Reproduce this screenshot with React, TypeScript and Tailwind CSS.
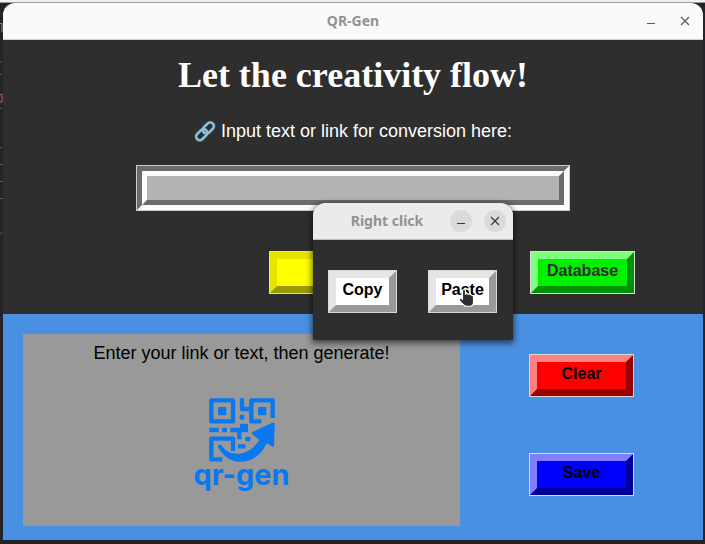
import type { ReactNode } from "react";

function WindowControls({ raised = false }: { raised?: boolean }) {
  const look = raised ? "bg-[#dadada] text-[#3d3d3d]" : "text-[#5c5c5c]";
  return (
    <div className="flex items-center justify-end gap-3">
      <button
        type="button"
        aria-label="Minimize"
        className={`flex size-[22px] items-center justify-center rounded-full ${look}`}
      >
        <svg width="12" height="12" viewBox="0 0 12 12" fill="currentColor">
          <rect x="2" y="8" width="8" height="1" />
        </svg>
      </button>
      <button
        type="button"
        aria-label="Close"
        className={`flex size-[22px] items-center justify-center rounded-full ${look}`}
      >
        <svg width="12" height="12" viewBox="0 0 12 12" stroke="currentColor" strokeWidth="1.3">
          <path d="M2 2 L10 10 M10 2 L2 10" />
        </svg>
      </button>
    </div>
  );
}

function RaisedButton({
  edge,
  width,
  children,
}: {
  edge: string;
  width: string;
  children?: ReactNode;
}) {
  return (
    <button
      type="button"
      className={`flex h-[43px] border border-[#d9d9d9] text-base leading-5 font-bold ${width}`}
    >
      <span className={`flex h-full w-full justify-center border-7 pt-[2px] ${edge}`}>
        {children}
      </span>
    </button>
  );
}

function LinkIcon() {
  return (
    <svg width="22" height="22" viewBox="0 0 66 66" fill="none" aria-hidden="true">
      <g stroke="#5b8fa3" strokeWidth="9">
        <rect x="-19" y="-11" width="38" height="22" rx="11" transform="translate(43 24) rotate(-45)" />
        <rect x="-19" y="-11" width="38" height="22" rx="11" transform="translate(23 44) rotate(-45)" />
      </g>
      <g stroke="#8fc3d6" strokeWidth="6">
        <rect x="-19" y="-11" width="38" height="22" rx="11" transform="translate(43 24) rotate(-45)" />
        <rect x="-19" y="-11" width="38" height="22" rx="11" transform="translate(23 44) rotate(-45)" />
      </g>
    </svg>
  );
}

function Logo() {
  return (
    <div className="flex flex-col items-center text-[#0878f0]">
      <svg width="66" height="65" viewBox="84 37 198 195" fill="none" aria-hidden="true">
        <g stroke="currentColor" strokeWidth="13" strokeLinejoin="round">
          <rect x="91" y="44" width="65" height="63" />
          <path d="M275 97 V44 H211 V107 H241" />
          <path d="M183 38 V70 H204" />
          <path d="M85 133 H113 M148 133 H184 M175 130 V161 M171 182 H193" />
          <path d="M156 196 V159 H91 V221 H124" />
        </g>
        <g fill="currentColor">
          <rect x="111" y="64" width="25" height="25" rx="3" />
          <rect x="231" y="64" width="25" height="25" rx="3" />
          <rect x="176" y="87" width="14" height="15" rx="3" />
          <rect x="123" y="126" width="15" height="14" rx="4" />
          <rect x="177" y="114" width="24" height="26" rx="3" />
          <rect x="193" y="153" width="15" height="14" rx="3" />
          <path d="M111 183 C110 176 121 175 124 182 C147 215 203 214 235 163 L214 146 Q209 141 216 138 L274 111 Q281 109 281 116 L279 179 Q278 187 272 182 L257 173 C227 242 143 248 111 183 Z" />
        </g>
      </svg>
      <span className="-mt-1 font-[Inter,sans-serif] text-[29px] leading-8 font-bold">qr-gen</span>
    </div>
  );
}

function HandCursor() {
  return (
    <svg
      className="pointer-events-none absolute top-[18px] left-[30px]"
      width="17"
      height="20"
      viewBox="0 0 17 20"
      aria-hidden="true"
    >
      <path
        d="M4.500 2.500 Q6 .5 7.500 2.500 V6 Q9 5 10.300 6.300 Q11.800 5.500 13 7 Q15.500 6.800 15.500 9.500 V14 Q15.500 18.300 12 18.300 H9 Q6.500 18.300 5 16.300 L1.300 12.500 Q.8 10 3 10.300 L4.500 11.300 Z"
        fill="#2e2e2e"
        stroke="#fff"
        strokeWidth="1.1"
      />
    </svg>
  );
}

function RightClickDialog() {
  return (
    <section
      role="dialog"
      aria-label="Right click"
      className="absolute top-[203px] left-[313px] w-[200px] rounded-t-xl bg-[#2e2e2e] shadow-[0_2px_6px_1px_rgba(0,0,0,0.6)]"
    >
      <header className="flex h-[37px] items-center rounded-t-xl border-b border-[#bdbdbd] bg-[#ebebeb] px-[7px]">
        <h2 className="flex-1 pl-1 text-center font-['Noto_Sans',sans-serif] text-sm font-bold text-[#929292]">
          Right click
        </h2>
        <WindowControls raised />
      </header>
      <div className="flex h-[100px] items-start justify-between px-4 pt-[30px] pl-[15px]">
        <RaisedButton
          width="w-[69px]"
          edge="bg-white text-black border-t-[#e5e5e5] border-l-[#e5e5e5] border-r-[#999] border-b-[#999]"
        >
          Copy
        </RaisedButton>
        <div className="relative">
          <RaisedButton
            width="w-[69px]"
            edge="bg-white text-black border-t-[#e5e5e5] border-l-[#e5e5e5] border-r-[#999] border-b-[#999]"
          >
            Paste
          </RaisedButton>
          <HandCursor />
        </div>
      </div>
    </section>
  );
}

function EditorEdge() {
  return (
    <svg className="absolute top-0 left-0" width="3" height="260" viewBox="0 0 3 260" fill="none" aria-hidden="true">
      <path d="M0 23.500 H2 V32" stroke="#8d8d8d" />
      <path d="M0 94.500 H2 V102 H0" stroke="#b5693a" />
      <path d="M0 63 L2 61 M0 74 L2 75 M0 108 L2 109 M0 148 L2 147 M0 164.500 H3 M0 181.500 H3 M0 198.500 H3 M0 235 L2 232" stroke="#5b5c60" />
    </svg>
  );
}

export default function App() {
  return (
    <div className="relative flex h-screen flex-col bg-[#232427] pr-[2px] pb-1 pl-[3px] font-['Liberation_Sans',Arial,sans-serif]">
      <div className="-mr-[2px] -ml-[3px] h-[3px] shrink-0 border-b border-[#999] bg-[#f1f1f1]" />
      <EditorEdge />
      <main className="flex flex-1 flex-col">
        <header className="grid h-[37px] shrink-0 grid-cols-[1fr_auto_1fr] items-center rounded-t-xl border-b border-[#d0d0d0] bg-[#fafafa] px-[7px]">
          <h2 className="col-start-2 font-['Noto_Sans',sans-serif] text-sm font-bold text-[#929292]">
            QR-Gen
          </h2>
          <WindowControls />
        </header>

        <section className="flex h-[274px] shrink-0 flex-col bg-[#2e2e2e] pt-[15px] text-white">
          <h1 className="text-center font-['Liberation_Serif',serif] text-4xl leading-10 font-bold">
            Let the creativity flow!
          </h1>
          <label
            htmlFor="source"
            className="mt-6 flex items-center justify-center gap-[5px] text-lg leading-6"
          >
            <LinkIcon />
            Input text or link for conversion here:
          </label>
          <div className="mt-[22px] flex self-center border border-[#ccc]">
            <div className="border-5 border-t-[#6b6b6b] border-r-[#fcfcfc] border-b-[#fcfcfc] border-l-[#6b6b6b]">
              <div className="border-5 border-t-[#fcfcfc] border-r-[#6b6b6b] border-b-[#6b6b6b] border-l-[#fcfcfc]">
                <input
                  id="source"
                  type="text"
                  className="block h-6 w-[412px] bg-[#b3b3b3] px-1 text-black outline-none"
                />
              </div>
            </div>
          </div>
          <div className="mt-10 grid grid-cols-[1fr_auto_1fr]">
            <div className="col-start-2">
              <RaisedButton
                width="w-[168px]"
                edge="bg-[#ff0] text-black border-t-[#e5e500] border-l-[#e5e500] border-r-[#999900] border-b-[#999900]"
              />
            </div>
            <div className="flex justify-end pr-[68px]">
              <RaisedButton
                width="w-[105px]"
                edge="bg-[#00f000] text-[#2e2e2e] border-t-[#80ff80] border-l-[#80ff80] border-r-[#009000] border-b-[#009000]"
              >
                Database
              </RaisedButton>
            </div>
          </div>
        </section>

        <section className="flex flex-1 bg-[#4a90e2] pt-5 pb-[14px] pl-5">
          <div className="flex flex-1 flex-col items-center bg-[#999] pt-[7px]">
            <p className="text-lg leading-6 text-black">Enter your link or text, then generate!</p>
            <div className="mt-[33px]">
              <Logo />
            </div>
          </div>
          <div className="flex w-[243px] flex-col items-center gap-14 pt-5">
            <RaisedButton
              width="w-[105px]"
              edge="bg-[#f00] text-black border-t-[#ff8080] border-l-[#ff8080] border-r-[#990000] border-b-[#990000]"
            >
              Clear
            </RaisedButton>
            <RaisedButton
              width="w-[105px]"
              edge="bg-[#00f] text-black border-t-[#8080ff] border-l-[#8080ff] border-r-[#000099] border-b-[#000099]"
            >
              Save
            </RaisedButton>
          </div>
        </section>
      </main>
      <RightClickDialog />
    </div>
  );
}
